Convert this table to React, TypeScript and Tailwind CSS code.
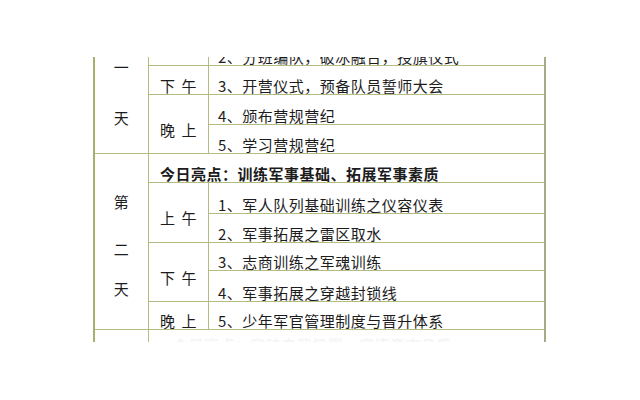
import React from 'react'

const FONT = "font-['Noto_Sans_CJK_SC','Noto_Sans_CJK_JP',sans-serif]"

function ItemCell({ text, row, clip }: { text: string; row: string; clip?: boolean }) {
  return (
    <div className={`${row} col-start-3 bg-white flex items-end pl-[9px] ${clip ? 'overflow-hidden' : ''}`}>
      <span className="leading-[17px] whitespace-nowrap">{text}</span>
    </div>
  )
}

function SlotCell({ a, b, row }: { a: string; b: string; row: string }) {
  return (
    <div className={`${row} col-start-2 bg-white flex items-center justify-center gap-[6px] pt-[10px] leading-[17px]`}>
      <span>{a}</span>
      <span>{b}</span>
    </div>
  )
}

export default function App() {
  return (
    <div className={`w-[640px] h-[400px] bg-white pt-[57px] pl-[93px] ${FONT} text-[15px] tracking-[0.5px] text-[#1c1c1c]`}>
      <div className="w-[453px] border-l-2 border-r-2 border-l-[#a1b36c] border-r-[#a6aa88] bg-[#b1bb82] grid grid-cols-[53px_59px_335px] grid-rows-[8px_28px_29px_28px_28px_30px_28px_27px_30px_27px_12px] gap-px">
        {/* day one (top cut off) */}
        <div className="row-start-1 row-span-4 col-start-1 bg-white flex flex-col items-center leading-[20px]">
          <span>一</span>
          <span className="mt-[31px]">天</span>
        </div>
        <div className="row-start-1 col-start-2 bg-white" />
        <ItemCell row="row-start-1" clip text="2、分班编队，破冰融合，授旗仪式" />
        <SlotCell row="row-start-2" a="下" b="午" />
        <ItemCell row="row-start-2" text="3、开营仪式，预备队员誓师大会" />
        <SlotCell row="row-start-3 row-span-2" a="晚" b="上" />
        <ItemCell row="row-start-3" text="4、颁布营规营纪" />
        <ItemCell row="row-start-4" text="5、学习营规营纪" />

        {/* day two */}
        <div className="row-start-5 row-span-6 col-start-1 bg-white flex flex-col items-center leading-[20px] pt-[38px]">
          <span>第</span>
          <span className="mt-[27px]">二</span>
          <span className="mt-[20px]">天</span>
        </div>
        <div className="row-start-5 col-start-2 col-span-2 bg-white flex items-end pl-[11px]">
          <span className="leading-[17px] font-bold whitespace-nowrap">今日亮点：训练军事基础、拓展军事素质</span>
        </div>
        <SlotCell row="row-start-6 row-span-2" a="上" b="午" />
        <ItemCell row="row-start-6" text="1、军人队列基础训练之仪容仪表" />
        <ItemCell row="row-start-7" text="2、军事拓展之雷区取水" />
        <SlotCell row="row-start-8 row-span-2" a="下" b="午" />
        <ItemCell row="row-start-8" text="3、志商训练之军魂训练" />
        <ItemCell row="row-start-9" text="4、军事拓展之穿越封锁线" />
        <SlotCell row="row-start-10" a="晚" b="上" />
        <ItemCell row="row-start-10" text="5、少年军官管理制度与晋升体系" />

        {/* next day (bottom cut off, faded) */}
        <div className="row-start-11 col-start-1 bg-white" />
        <div className="row-start-11 col-start-2 col-span-2 bg-white overflow-hidden pl-[24px] pt-[7px]">
          <span className="block leading-[16px] font-bold whitespace-nowrap text-[#f5f5f5]">今日亮点：突破自我极限、磨练意志品质</span>
        </div>
      </div>
    </div>
  )
}
